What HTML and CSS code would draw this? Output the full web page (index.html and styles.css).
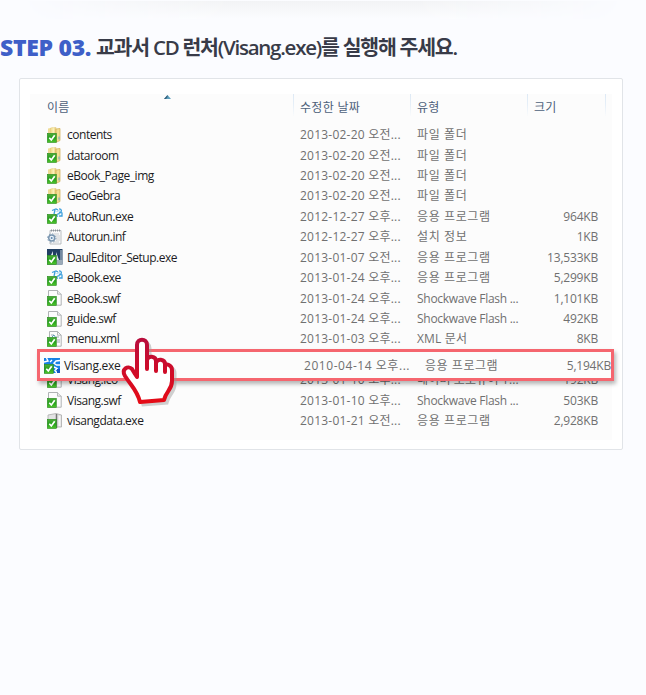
FILE: index.html
```html
<!DOCTYPE html>
<html lang="ko">
<head>
<meta charset="utf-8">
<title>STEP 03</title>
<link rel="stylesheet" href="styles.css">
</head>
<body>
<svg class="defs" width="0" height="0">
  <defs>
    <linearGradient id="green" x1="0" y1="0" x2="0" y2="1"><stop offset="0" stop-color="#4fae3c"/><stop offset=".5" stop-color="#25a01c"/><stop offset="1" stop-color="#4fc62c"/></linearGradient>
    <linearGradient id="fold" x1="0" y1="0" x2="1" y2="0"><stop offset="0" stop-color="#f0d888"/><stop offset=".5" stop-color="#fbf0b8"/><stop offset="1" stop-color="#dfbd62"/></linearGradient>
    <linearGradient id="red" x1="0" y1="0" x2="0" y2="1"><stop offset="0" stop-color="#b90d3c"/><stop offset="1" stop-color="#e50b16"/></linearGradient>
  </defs>
  <symbol id="check" viewBox="0 0 16 16"><rect x="0.3" y="6.3" width="9" height="9.2" fill="url(#green)" stroke="#2a8a20" stroke-width=".6"/><path d="M2.300 10.700l2 2.300 3.400-4.700" fill="none" stroke="#fff" stroke-width="1.700"/></symbol>
  <symbol id="folder" viewBox="0 0 16 16"><path d="M1 1.500l5-1v12H1z" fill="#efdc96"/><path d="M3.500 1l5.500-.6.5 13L4 13z" fill="url(#fold)" stroke="#e2c977" stroke-width=".5"/><path d="M9 2l4-.5v12L9 15.300z" fill="#f3df94" stroke="#cfae52" stroke-width=".7"/><path d="M12 9.500v3" stroke="#65a8cc"/><use href="#check"/></symbol>
  <symbol id="app" viewBox="0 0 16 16"><path d="M5 2.500l4-1.500 2 1M8 2l-1 4M12 .8c3 0 3 3 1 4l-3 2M12 4l3 1v3h-3M8 6.500l3 2" fill="none" stroke="#3c9fdc" stroke-width="1.300"/><path d="M9.500 3.500l3-1M10 5.500l3 1.700" stroke="#9bd0ef"/><use href="#check"/></symbol>
  <symbol id="inf" viewBox="0 0 16 16"><path d="M3 1.500h11v13.500H3z" fill="#fafafa" stroke="#a9aeb2" stroke-width=".8"/><path d="M4 1.500h9" stroke="#8b9298" stroke-width="1.800" stroke-dasharray="1 1"/><path d="M7 5h5M9 7h4M9 9h4M9 11h4M6 13h6" stroke="#c9cdd0"/><circle cx="4.700" cy="9" r="3" fill="#e8f2fa" stroke="#7995af" stroke-width="1.500"/><circle cx="4.700" cy="9" r="4.200" fill="none" stroke="#7995af" stroke-width="1" stroke-dasharray="1.300 2"/><circle cx="4.700" cy="9" r="1" fill="#5e86ac"/></symbol>
  <symbol id="setup" viewBox="0 0 16 16"><path d="M0 0h15.500v15.500H0z" fill="#213f63"/><path d="M0 11h15.500v4.500H0z" fill="#9baab8"/><path d="M6 2v8H2zM9 3l3 8H9z" fill="#dce6ee"/><path d="M14 1v10" stroke="#c6d3de"/><use href="#check"/></symbol>
  <symbol id="doc" viewBox="0 0 16 16"><path d="M1.500.5h9l3.700 3.700v11H1.500z" fill="#fcfcfc" stroke="#a6a9ab" stroke-width=".9"/><path d="M10.500.5v3.700h3.700" fill="#e9ebec" stroke="#a6a9ab" stroke-width=".8"/><use href="#check"/></symbol>
  <symbol id="xml" viewBox="0 0 16 16"><path d="M2.500.5h8l3.700 3.700v11H2.500z" fill="#fcfcfc" stroke="#a6a9ab" stroke-width=".9"/><path d="M10.500.5v3.700h3.700" fill="none" stroke="#a6a9ab" stroke-width=".8"/><path d="M4 4h3M9 6h3M10 9h3M10 11h3" stroke="#9ba8b0"/><path d="M5 6l2-2 2 3" fill="none" stroke="#5a9ab4"/><use href="#check"/></symbol>
  <symbol id="visang" viewBox="0 0 16 16"><path d="M0 0h16v15H0z" fill="#1680e4"/><path d="M2.500 0l1.500 3-4 1M16 2.500l-4 .5-2 2.200 2.500 1.800H16M10 9l3 1.500-2 2 2 2.500M6 4l2-2" fill="none" stroke="#fff" stroke-width="1.400"/><path d="M13 11h3v4h-3z" fill="#1557c2"/><use href="#check"/></symbol>
  <symbol id="zip" viewBox="0 0 16 16"><path d="M1 2l8-1.500 5.500 1.500v12H1z" fill="#e3e4e4" stroke="#aaa" stroke-width=".8"/><path d="M9.500 1v14" stroke="#777" stroke-width="1.500"/><path d="M12.500 3v10" stroke="#f8f8f8" stroke-width="1.500"/><use href="#check"/></symbol>
</svg>

<div class="top-shade"></div>
<h1><span class="step">STEP 03.</span><span class="title">교과서 CD 런처(Visang.exe)를 실행해 주세요.</span></h1>

<section class="panel">
  <div class="list">
    <div class="head"><span>이름</span><span>수정한 날짜</span><span>유형</span><span>크기</span></div>
    <div class="rows">
      <div class="row"><svg><use href="#folder"/></svg><b>contents</b><i>2013-02-20 오전...</i><em>파일 폴더</em><s></s></div>
      <div class="row"><svg><use href="#folder"/></svg><b>dataroom</b><i>2013-02-20 오전...</i><em>파일 폴더</em><s></s></div>
      <div class="row"><svg><use href="#folder"/></svg><b>eBook_Page_img</b><i>2013-02-20 오전...</i><em>파일 폴더</em><s></s></div>
      <div class="row"><svg><use href="#folder"/></svg><b>GeoGebra</b><i>2013-02-20 오전...</i><em>파일 폴더</em><s></s></div>
      <div class="row"><svg><use href="#app"/></svg><b>AutoRun.exe</b><i>2012-12-27 오후...</i><em>응용 프로그램</em><s>964KB</s></div>
      <div class="row"><svg><use href="#inf"/></svg><b>Autorun.inf</b><i>2012-12-27 오후...</i><em>설치 정보</em><s>1KB</s></div>
      <div class="row"><svg><use href="#setup"/></svg><b>DaulEditor_Setup.exe</b><i>2013-01-07 오전...</i><em>응용 프로그램</em><s>13,533KB</s></div>
      <div class="row"><svg><use href="#app"/></svg><b>eBook.exe</b><i>2013-01-24 오후...</i><em>응용 프로그램</em><s>5,299KB</s></div>
      <div class="row"><svg><use href="#doc"/></svg><b>eBook.swf</b><i>2013-01-24 오후...</i><em class="latin">Shockwave Flash ...</em><s>1,101KB</s></div>
      <div class="row"><svg><use href="#doc"/></svg><b>guide.swf</b><i>2013-01-24 오후...</i><em class="latin">Shockwave Flash ...</em><s>492KB</s></div>
      <div class="row"><svg><use href="#xml"/></svg><b>menu.xml</b><i>2013-01-03 오후...</i><em class="mixed">XML 문서</em><s>8KB</s></div>
      <div class="row"></div>
      <div class="row"><svg><use href="#doc"/></svg><b>Visang.ico</b><i>2013-01-10 오후...</i><em class="mixed">네이버 포토뷰어 1...</em><s>192KB</s></div>
      <div class="row"><svg><use href="#doc"/></svg><b>Visang.swf</b><i>2013-01-10 오후...</i><em class="latin">Shockwave Flash ...</em><s>503KB</s></div>
      <div class="row"><svg><use href="#zip"/></svg><b>visangdata.exe</b><i>2013-01-21 오전...</i><em>응용 프로그램</em><s>2,928KB</s></div>
    </div>
    <svg class="sort" viewBox="0 0 7 4"><path d="M0 4l3.500-4L7 4z" fill="#5b9fbd"/><path d="M0 4l3.500-4v2L2 4z" fill="#355f7b"/></svg>
  </div>
  <div class="picked row"><svg><use href="#visang"/></svg><b>Visang.exe</b><i>2010-04-14 오후...</i><em>응용 프로그램</em><s>5,194KB</s></div>
  <svg class="hand" viewBox="0 0 60 72">
    <path d="M19 41V9c0-7 10-7 10 0v15c1-5 8-4 9 1v2c1-5 8-4 9 1v2c1-3 7-1 7 4v11c0 9-6 10-8 19l-24 2c-3-12-8-15-15-26-4-7 3-11 7-7z" transform="translate(3 3)" fill="#999" stroke="#999" stroke-width="3" opacity=".45"/>
    <path d="M19 41V9c0-7 10-7 10 0v24-9c1-5 9-4 9 1v10-8c1-5 9-4 9 1v8-6c1-3 7-1 7 4v11c0 9-6 10-8 19l-24 2c-3-12-8-15-15-26-4-7 3-11 7-7l3 5z" fill="#fff" stroke="url(#red)" stroke-width="4" stroke-linejoin="round"/>
  </svg>
</section>
</body>
</html>
```
FILE: styles.css
```css
* { box-sizing: border-box; }
body { margin: 0; height: 695px; overflow: hidden; background: #fbfcff; font-family: "Open Sans", "Noto Sans CJK KR", sans-serif; }
.defs { position: absolute; }
.top-shade { height: 18px; margin: 1px 20px 0; background: linear-gradient(#f2f3f5, #fbfcff); -webkit-mask-image: linear-gradient(90deg, transparent, #000 35%, #000 65%, transparent); mask-image: linear-gradient(90deg, transparent, #000 35%, #000 65%, transparent); }
h1 { display: flex; margin: 13px 0 0; height: 30px; line-height: 30px; font-size: 20.5px; white-space: nowrap; align-items: center; }
.step { width: 96px; color: #3e5fc8; font-size: 23px; font-weight: 800; letter-spacing: -.3px; }
.title { color: #383b48; font-weight: 600; letter-spacing: -1.25px; }
.panel { position: relative; width: 604px; height: 372px; margin: 16px 0 0 19px; padding: 15px 10px 0; background: #fff; border: 1px solid #e1e4e8; border-radius: 2px; }
.list { position: relative; width: 582px; height: 346px; background: #fcfcfc; }
.head { display: grid; grid-template-columns: 264px 117px 117px 78px; height: 27px; color: #4c607a; font-size: 12px; line-height: 27px; letter-spacing: .3px; }
.head span { height: 22px; padding-left: 6px; border-right: 1px solid; border-image: linear-gradient(#dce8f4, #e6eff8 50%, transparent) 1; }
.head span:first-child { padding-left: 17px; }
.rows { padding-top: 4px; }
.row { display: grid; grid-template-columns: 16px 234px 117px 100px 84px; height: 20.43px; margin-left: 17px; align-items: center; font-size: 12px; line-height: 20px; color: #707070; white-space: nowrap; }
.row svg { width: 16px; height: 16px; margin-top: -1px; }
.row b { padding-left: 4px; font-weight: 400; color: #1c1c24; letter-spacing: -.48px; }
.row i { padding-left: 3px; font-style: normal; letter-spacing: .22px; }
.row em { padding-left: 3px; font-style: normal; letter-spacing: .6px; }
.row em.latin { letter-spacing: -.28px; }
.row em.mixed { letter-spacing: .15px; }
.row s { text-align: right; text-decoration: none; letter-spacing: -.2px; }
.sort { position: absolute; left: 134px; top: 1px; width: 7px; height: 4px; }
.picked { position: absolute; left: 17px; top: 270px; width: 577px; height: 32px; margin: 0; padding: 2px 0 0 4px; border: 3px solid #f5666f; background: #fcfcfc; box-shadow: 2px 3px 4px rgba(0,0,0,.28); grid-template-columns: 17px 240px 121px 100px 89px; }
.picked b { padding-left: 3px; letter-spacing: -.3px; }
.picked i, .picked em { letter-spacing: .55px; }
.hand { position: absolute; left: 98px; top: 256px; width: 60px; height: 74px; }
```
